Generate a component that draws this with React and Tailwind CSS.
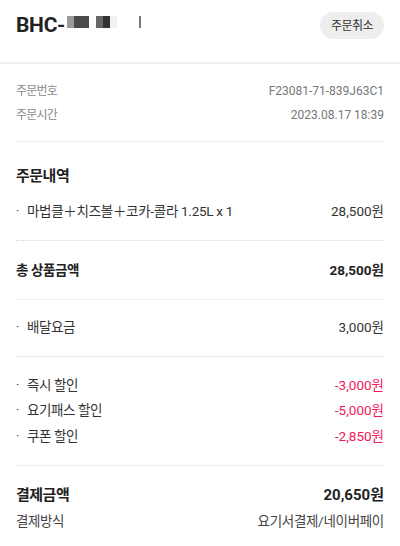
export default function App() {
  const font = { fontFamily: 'Roboto, "Noto Sans CJK KR", sans-serif' };
  const Row = ({ label, value, bullet, className = "", valueClass = "" }) => (
    <div className={`flex items-center justify-between h-6 ${className}`}>
      <div className="flex items-center">
        {bullet && <span className="w-[11px] text-[12px]">·</span>}
        <span>{label}</span>
      </div>
      <span className={valueClass}>{value}</span>
    </div>
  );
  return (
    <div className="w-[400px] h-[546px] bg-white overflow-hidden" style={font}>
      <div className="h-[64px] border-b-2 border-[#eeeeee] px-4 pt-3 flex items-start justify-between">
        <div className="flex items-center h-[27px]">
          <span className="text-[21px] font-bold text-[#222222] tracking-[-0.3px]">BHC-</span>
          <div className="flex items-start h-[12px] ml-[2px] mt-[-7px]">
            <div className="w-[7px] h-[12px] bg-[#9a9a9a]" />
            <div className="w-[15px] h-[12px] bg-[#4a4a4a]" />
            <div className="w-[7px] h-[12px] bg-white" />
            <div className="w-[7px] h-[12px] bg-[#666666]" />
            <div className="w-[7px] h-[12px] bg-[#333333]" />
            <div className="w-[7px] h-[12px] bg-[#f2f2f2]" />
            <div className="w-[22px] h-[12px] bg-white" />
            <div className="w-[2px] h-[12px] bg-[#777777]" />
          </div>
        </div>
        <button className="w-16 h-[27px] rounded-full bg-[#eeeeee] text-[12px] text-[#333333] tracking-[-0.5px]">
          주문취소
        </button>
      </div>

      <div className="px-4">
        <div className="pt-[15px] pb-[14px] border-b border-[#eeeeee] text-[12px]">
          <Row label={<span className="text-[#8a8a8a] tracking-[-0.8px]">주문번호</span>} value="F23081-71-839J63C1" valueClass="text-[#777777]" />
          <Row label={<span className="text-[#8a8a8a] tracking-[-0.8px]">주문시간</span>} value="2023.08.17 18:39" valueClass="text-[#777777]" />
        </div>

        <div className="pt-[23px] pb-[17px] border-b border-dotted border-[#d8d8d8]">
          <div className="h-[22px] flex items-center text-[15px] font-bold text-[#222222] tracking-[-0.5px]">주문내역</div>
          <Row
            className="mt-3 text-[13.5px] text-[#333333]"
            bullet
            label={<span className="tracking-[-0.3px]">마법클＋치즈볼＋코카-콜라 1.25L x 1</span>}
            value="28,500원"
          />
        </div>

        <div className="pt-[17px] pb-[17px] border-b border-[#f4f4f4]">
          <Row
            className="text-[13.5px] font-bold text-[#222222]"
            label={<span className="tracking-[-0.4px]">총 상품금액</span>}
            value="28,500원"
          />
        </div>

        <div className="pt-[15px] pb-[17px] border-b border-[#e8e8e8]">
          <Row
            className="text-[13.5px] text-[#333333]"
            bullet
            label={<span className="tracking-[-0.4px]">배달요금</span>}
            value="3,000원"
          />
        </div>

        <div className="pt-[15px] pb-[16px] border-b border-[#eeeeee] text-[13.5px] text-[#333333]">
          <Row className="h-[25.5px]" bullet label={<span className="tracking-[-0.4px]">즉시 할인</span>} value="-3,000원" valueClass="text-[#f2185c]" />
          <Row className="h-[25.5px]" bullet label={<span className="tracking-[-0.4px]">요기패스 할인</span>} value="-5,000원" valueClass="text-[#f2185c]" />
          <Row className="h-[25.5px]" bullet label={<span className="tracking-[-0.4px]">쿠폰 할인</span>} value="-2,850원" valueClass="text-[#f2185c]" />
        </div>

        <div className="pt-[18px]">
          <Row
            className="text-[15px] font-bold text-[#222222]"
            label={<span className="tracking-[-0.5px]">결제금액</span>}
            value="20,650원"
          />
          <Row
            className="mt-[2px] text-[13.5px] text-[#444444]"
            label={<span className="tracking-[-0.4px]">결제방식</span>}
            value={<span className="tracking-[-0.3px]">요기서결제/네이버페이</span>}
          />
        </div>
      </div>
    </div>
  );
}
